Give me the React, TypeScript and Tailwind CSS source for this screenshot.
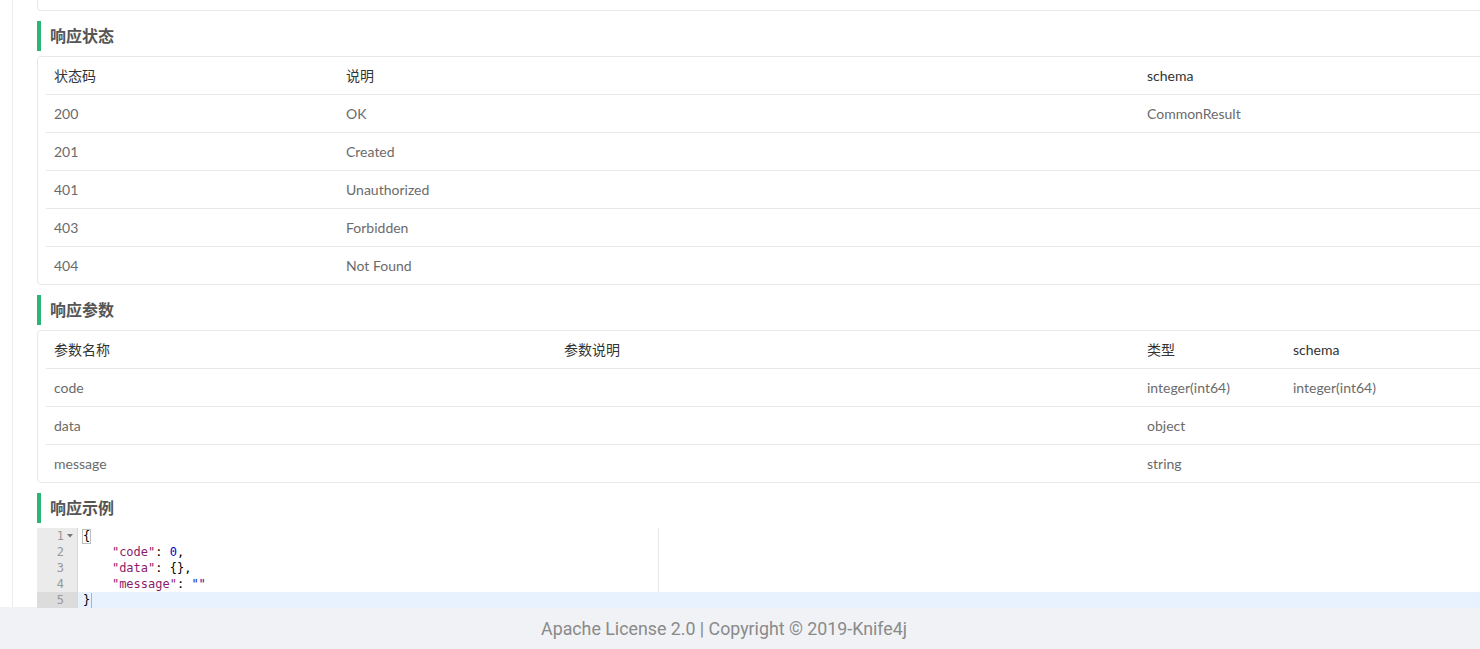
import React from "react";

const sans = { fontFamily: '"Lato", "Noto Sans CJK SC", sans-serif' };

function SectionTitle({ children }: { children: React.ReactNode }) {
  return (
    <div className="flex h-[30px] items-center border-l-4 border-[#2bb673] pl-[9px] text-[16px] font-bold text-[#555]" style={sans}>
      {children}
    </div>
  );
}

function Row({ cells, widths, head, first }: { cells: string[]; widths: string[]; head?: boolean; first?: boolean }) {
  return (
    <div className={first ? "flex h-[37px] items-center" : "flex h-[38px] items-center border-t border-[#e8e8e8]"}>
      {cells.map((c, i) => (
        <div key={i} className={`${widths[i]} shrink-0 px-2 text-[14px] ${head ? "text-[#333]" : "text-[#6b6b6b]"}`}>
          {c}
        </div>
      ))}
    </div>
  );
}

export default function App() {
  const w1 = ["w-[292px]", "w-[801px]", "w-[300px]"];
  const w2 = ["w-[510px]", "w-[583px]", "w-[146px]", "w-[200px]"];
  const codeLines: React.ReactNode[] = [
    <span className="relative"><span className="absolute -left-[1px] top-[0px] h-[15px] w-[9px] border border-[#bfbfbf]"></span>{"{"}</span>,
    <>
      {"    "}
      <span className="text-[#8e1a6a]">"code"</span>: <span className="text-[#0000cd]">0</span>,
    </>,
    <>
      {"    "}
      <span className="text-[#8e1a6a]">"data"</span>: {"{},"}
    </>,
    <>
      {"    "}
      <span className="text-[#8e1a6a]">"message"</span>: <span className="text-[#1a1aa6]">""</span>
    </>,
    <>{"}"}</>,
  ];
  return (
    <div className="h-[649px] w-[1480px] overflow-hidden bg-white" style={sans}>
      <div className="flex h-[607px]">
        <div className="w-[13px] shrink-0 border-r border-[#ececec]"></div>
        <div className="w-[24px] shrink-0"></div>
        <div className="w-[1500px] shrink-0">
          <div className="h-[11px] rounded-b border border-t-0 border-[#e8e8e8]"></div>
          <div className="mt-[10px]">
            <SectionTitle>响应状态</SectionTitle>
          </div>
          <div className="mt-[5px] rounded border border-[#e8e8e8] px-2">
            <Row head first cells={["状态码", "说明", "schema"]} widths={w1} />
            <Row cells={["200", "OK", "CommonResult"]} widths={w1} />
            <Row cells={["201", "Created", ""]} widths={w1} />
            <Row cells={["401", "Unauthorized", ""]} widths={w1} />
            <Row cells={["403", "Forbidden", ""]} widths={w1} />
            <Row cells={["404", "Not Found", ""]} widths={w1} />
          </div>
          <div className="mt-[10px]">
            <SectionTitle>响应参数</SectionTitle>
          </div>
          <div className="mt-[5px] rounded border border-[#e8e8e8] px-2">
            <Row head first cells={["参数名称", "参数说明", "类型", "schema"]} widths={w2} />
            <Row cells={["code", "", "integer(int64)", "integer(int64)"]} widths={w2} />
            <Row cells={["data", "", "object", ""]} widths={w2} />
            <Row cells={["message", "", "string", ""]} widths={w2} />
          </div>
          <div className="mt-[10px]">
            <SectionTitle>响应示例</SectionTitle>
          </div>
          <div className="relative mt-[5px] flex text-[12px] leading-[16px]" style={{ fontFamily: '"DejaVu Sans Mono", monospace' }}>
            <div className="w-[41px] shrink-0 border-r border-[#d8d8d8] bg-[#ebebeb] text-[#999]">
              {[1, 2, 3, 4, 5].map((n) => (
                <div key={n} className={`flex h-[16px] items-center justify-end pr-[13px] ${n === 5 ? "bg-[#dcdcdc]" : ""}`}>
                  <span className="relative">
                    {n}
                    {n === 1 && (
                      <svg className="absolute left-[10px] top-[6px]" width="6" height="4" viewBox="0 0 6 4">
                        <path d="M0 0 L6 0 L3 3.5 Z" fill="#777" />
                      </svg>
                    )}
                  </span>
                </div>
              ))}
            </div>
            <div className="relative flex-1 text-[#000]">
              <div className="absolute left-[580px] top-0 h-[80px] w-px bg-[#e8e8e8]"></div>
              {codeLines.map((l, i) => (
                <div key={i} className={`relative h-[16px] whitespace-pre pl-[5px] ${i === 4 ? "bg-[#e8f2fe]" : ""}`}>
                  {l}
                  {i === 4 && <span className="absolute left-[13px] top-[1px] h-[15px] w-px bg-[#9db9d8]"></span>}
                </div>
              ))}
            </div>
          </div>
        </div>
      </div>
      <div className="flex h-[42px] items-center justify-center bg-[#f0f2f5] pt-[2px] pr-[32px] text-[17.8px] text-[#8a8a8a]" style={{ fontFamily: '"Roboto", "Liberation Sans", sans-serif' }}>
        Apache License 2.0 | Copyright © 2019-Knife4j
      </div>
    </div>
  );
}
